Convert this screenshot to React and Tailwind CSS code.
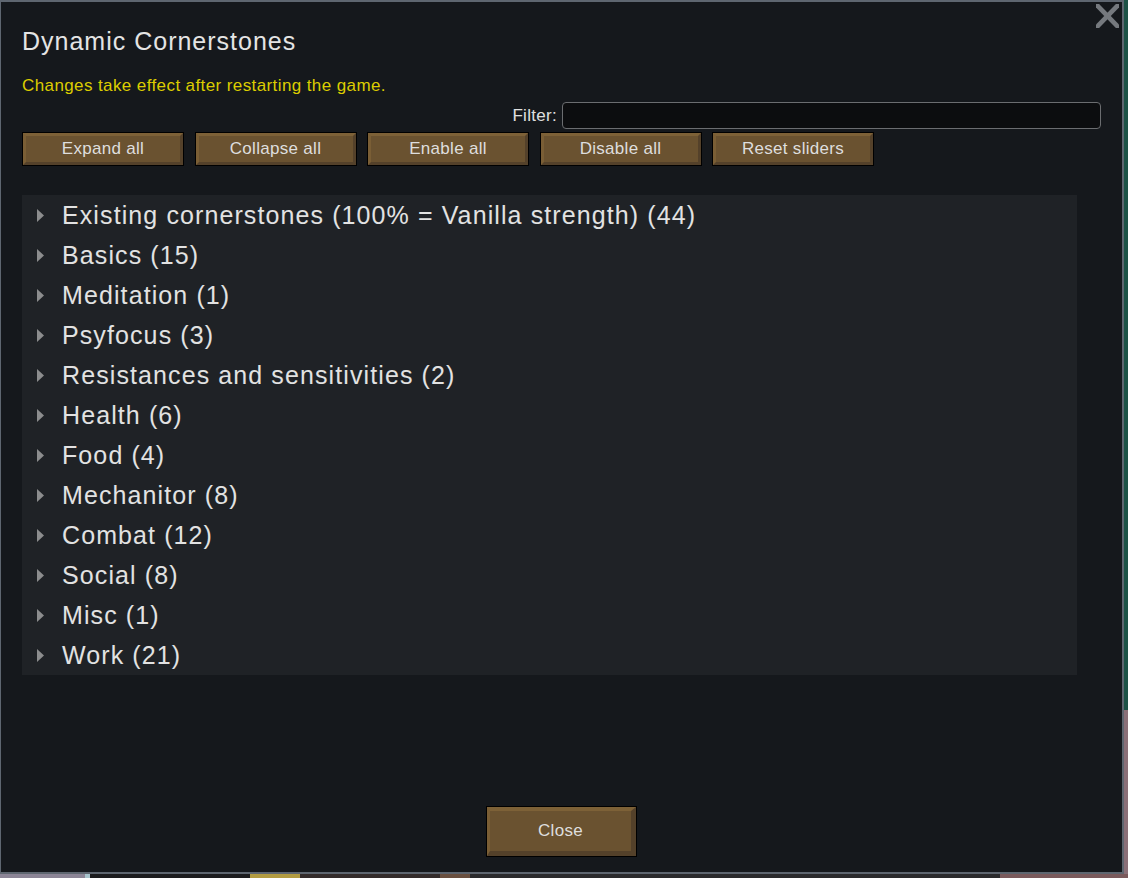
import React from "react";

const cats = [
  "Existing cornerstones (100% = Vanilla strength) (44)",
  "Basics (15)",
  "Meditation (1)",
  "Psyfocus (3)",
  "Resistances and sensitivities (2)",
  "Health (6)",
  "Food (4)",
  "Mechanitor (8)",
  "Combat (12)",
  "Social (8)",
  "Misc (1)",
  "Work (21)",
];

function GameButton({ label, className = "", bevel = "small" }) {
  const inner =
    bevel === "small"
      ? "border-t-[3px] border-l-[3px] border-b-[3px] border-r-[3px]"
      : "border-t-[4px] border-l-[3px] border-b-[5px] border-r-[5px]";
  return (
    <div className={`border border-black ${className}`}>
      <div
        className={`w-full h-full ${inner} border-t-[#7d6137] border-l-[#7a5e35] border-b-[#54412a] border-r-[#54412a] bg-[#6a5230] flex items-center justify-center text-[17px] tracking-[0.3px] text-[#dedede]`}
      >
        {label}
      </div>
    </div>
  );
}

export default function App() {
  return (
    <div className="w-[1128px] h-[878px] flex flex-col overflow-hidden bg-[#1c4a40] font-['Liberation_Sans',Arial,sans-serif]">
      <div className="flex h-[874px]">
        <div className="relative w-[1124px] h-[874px] bg-[#15181c] border-[#5e6670] border-l border-t-2 border-r-2 border-b-2 flex flex-col pl-[21px]">
          <svg
            className="absolute right-[3px] top-[2px]"
            width="23"
            height="24"
            viewBox="0 0 23 24"
          >
            <line x1="-2" y1="-2" x2="25" y2="26" stroke="#75797e" strokeWidth="4.6" />
            <line x1="25" y1="-2" x2="-2" y2="26" stroke="#75797e" strokeWidth="4.6" />
          </svg>

          <div className="mt-[24px] h-[30px] leading-[30px] text-[25px] tracking-[1px] text-[#e4e4e4]">
            Dynamic Cornerstones
          </div>
          <div className="mt-[20px] h-[20px] leading-[20px] text-[17px] tracking-[0.4px] text-[#dccd00]">
            Changes take effect after restarting the game.
          </div>

          <div className="mt-[6px] h-[27px] flex items-center justify-end gap-[5px] pr-[21px]">
            <span className="text-[17px] tracking-[0.3px] text-[#e0e0e0]">Filter:</span>
            <div className="w-[539px] h-[27px] bg-[#0c0d0f] border border-[#6b6d70] rounded-[4px]" />
          </div>

          <div className="mt-[3px] h-[34px] flex gap-[10.5px] leading-[34px]">
            <GameButton label="Expand all" className="w-[162px] h-[34px]" />
            <GameButton label="Collapse all" className="w-[162px] h-[34px]" />
            <GameButton label="Enable all" className="w-[162px] h-[34px]" />
            <GameButton label="Disable all" className="w-[162px] h-[34px]" />
            <GameButton label="Reset sliders" className="w-[162px] h-[34px]" />
          </div>

          <div className="mt-[29px] w-[1055px] h-[480px] bg-[#1f2226] flex flex-col">
            {cats.map((c) => (
              <div key={c} className="h-[40px] flex items-center pl-[15px]">
                <svg width="7" height="13" viewBox="0 0 7 13" className="shrink-0">
                  <polygon points="0,0 7,6.5 0,13" fill="#8c8d8e" />
                </svg>
                <span className="ml-[18px] text-[25px] tracking-[1.1px] text-[#e2e2e2] leading-[40px]">
                  {c}
                </span>
              </div>
            ))}
          </div>

          <div className="flex-1" />
          <div className="flex justify-center pr-[21px] mb-[15px]">
            <GameButton label="Close" className="w-[151px] h-[51px]" bevel="big" />
          </div>
        </div>
        <div className="w-[4px] flex flex-col">
          <div className="h-[710px] bg-[#1d5246]" />
          <div className="flex-1 bg-[#8a7078]" />
        </div>
      </div>
      <div className="h-[4px] flex">
        <div className="w-[85px] bg-[#8c8596]" />
        <div className="w-[5px] bg-[#a8c4cc]" />
        <div className="w-[160px] bg-[#1c1c1e]" />
        <div className="w-[50px] bg-[#b39c42]" />
        <div className="w-[140px] bg-[#332b2a]" />
        <div className="w-[30px] bg-[#6a5040]" />
        <div className="w-[530px] bg-[#2a2a2c]" />
        <div className="flex-1 bg-[#7a5a5c]" />
      </div>
    </div>
  );
}
